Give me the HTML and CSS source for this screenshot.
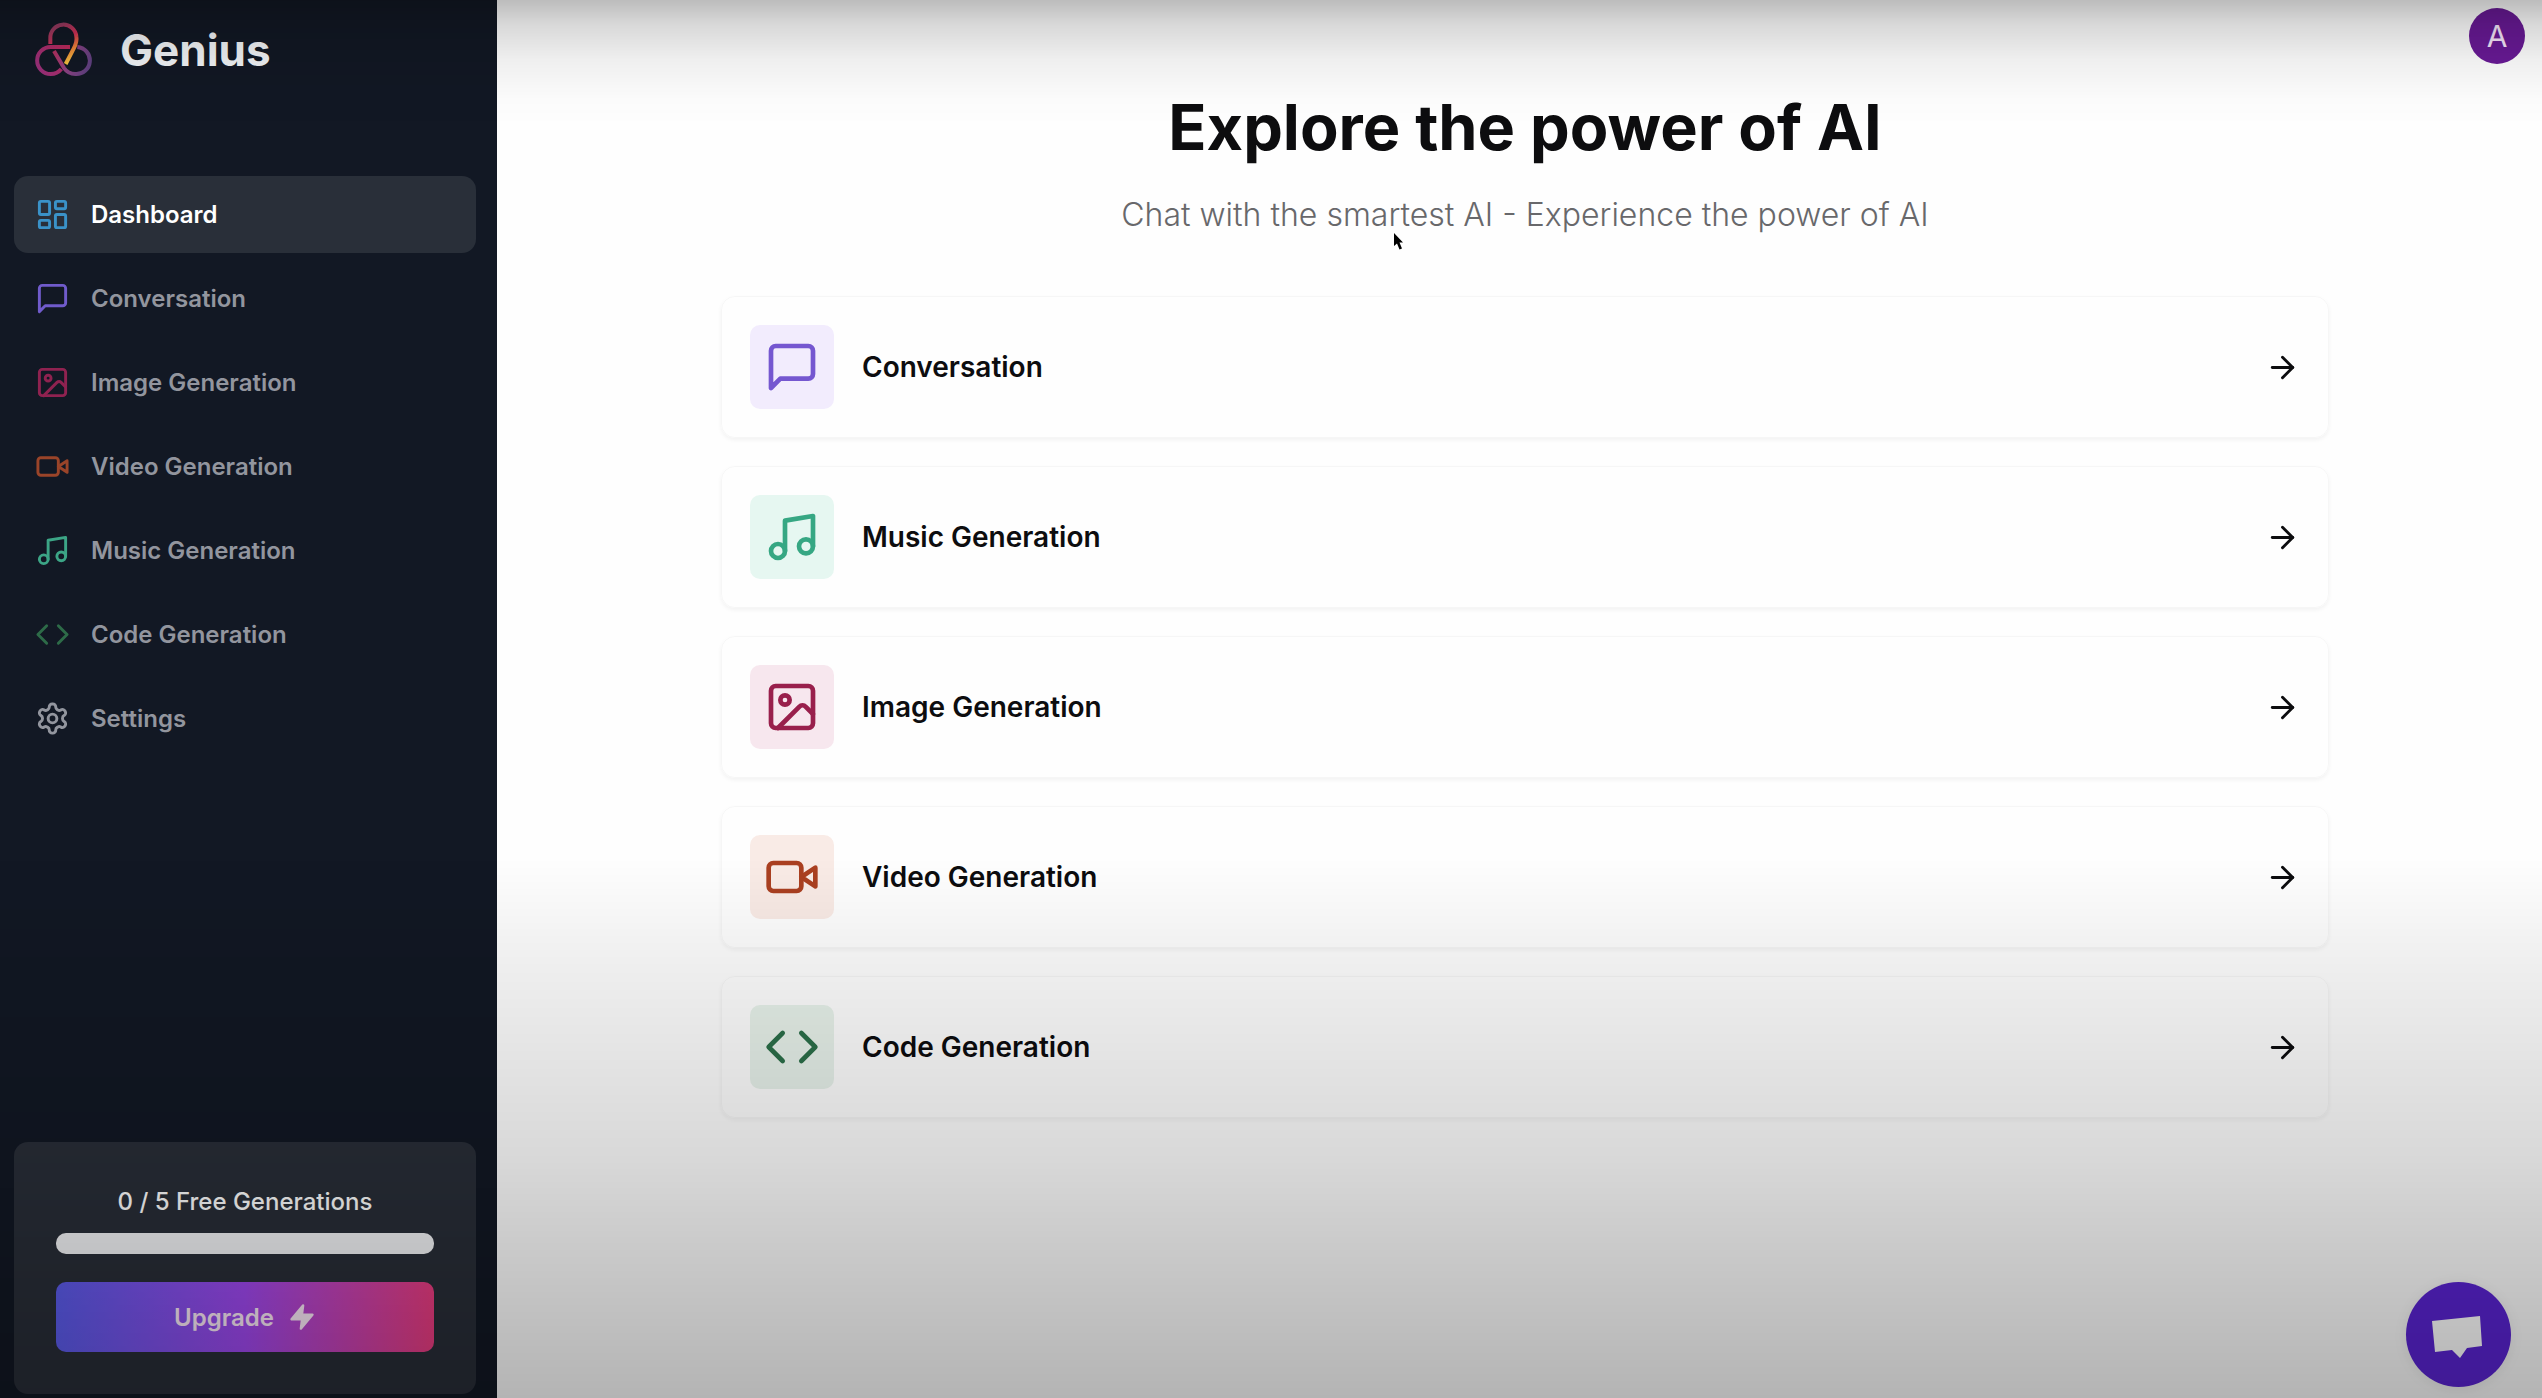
FILE: index.html
```html
<!DOCTYPE html>
<html lang="en">
<head>
<meta charset="utf-8">
<meta name="viewport" content="width=device-width, initial-scale=1">
<title>Genius</title>
<link rel="stylesheet" href="styles.css">
</head>
<body>
<svg class="defs" aria-hidden="true">
  <defs>
    <symbol id="i-dashboard" viewBox="0 0 24 24"><rect x="3" y="3" width="7" height="9" rx="1"/><rect x="14" y="3" width="7" height="5" rx="1"/><rect x="14" y="12" width="7" height="9" rx="1"/><rect x="3" y="16" width="7" height="5" rx="1"/></symbol>
    <symbol id="i-message" viewBox="0 0 24 24"><path d="M21 15a2 2 0 0 1-2 2H7l-4 4V5a2 2 0 0 1 2-2h14a2 2 0 0 1 2 2z"/></symbol>
    <symbol id="i-image" viewBox="0 0 24 24"><rect x="3" y="3" width="18" height="18" rx="2"/><circle cx="9" cy="9" r="2"/><path d="m21 15-3.086-3.086a2 2 0 0 0-2.828 0L6 21"/></symbol>
    <symbol id="i-video" viewBox="0 0 24 24"><path d="m22 8-6 4 6 4V8Z"/><rect x="2" y="6" width="14" height="12" rx="2"/></symbol>
    <symbol id="i-music" viewBox="0 0 24 24"><path d="M9 18V5l12-2v13"/><circle cx="6" cy="18" r="3"/><circle cx="18" cy="16" r="3"/></symbol>
    <symbol id="i-code" viewBox="0 0 24 24"><path d="m16 18 6-6-6-6"/><path d="m8 6-6 6 6 6"/></symbol>
    <symbol id="i-settings" viewBox="0 0 24 24"><path d="M12.22 2h-.44a2 2 0 0 0-2 2v.18a2 2 0 0 1-1 1.73l-.43.25a2 2 0 0 1-2 0l-.15-.08a2 2 0 0 0-2.73.73l-.22.38a2 2 0 0 0 .73 2.73l.15.1a2 2 0 0 1 1 1.72v.51a2 2 0 0 1-1 1.74l-.15.09a2 2 0 0 0-.73 2.73l.22.38a2 2 0 0 0 2.73.73l.15-.08a2 2 0 0 1 2 0l.43.25a2 2 0 0 1 1 1.73V20a2 2 0 0 0 2 2h.44a2 2 0 0 0 2-2v-.18a2 2 0 0 1 1-1.73l.43-.25a2 2 0 0 1 2 0l.15.08a2 2 0 0 0 2.73-.73l.22-.39a2 2 0 0 0-.73-2.73l-.15-.08a2 2 0 0 1-1-1.74v-.5a2 2 0 0 1 1-1.74l.15-.09a2 2 0 0 0 .73-2.73l-.22-.38a2 2 0 0 0-2.73-.73l-.15.08a2 2 0 0 1-2 0l-.43-.25a2 2 0 0 1-1-1.73V4a2 2 0 0 0-2-2z"/><circle cx="12" cy="12" r="3"/></symbol>
    <symbol id="i-arrow" viewBox="0 0 24 24"><path d="M5 12h14"/><path d="m12 5 7 7-7 7"/></symbol>
    <symbol id="i-zap" viewBox="0 0 24 24"><path d="M13 2 3 14h9l-1 8 10-12h-9l1-8z"/></symbol>
    <linearGradient id="g-top" gradientUnits="userSpaceOnUse" x1="150" y1="90" x2="205" y2="190"><stop offset="0" stop-color="#933a5f"/><stop offset=".4" stop-color="#cf2f56"/><stop offset=".7" stop-color="#ee8338"/><stop offset="1" stop-color="#f3c340"/></linearGradient>
    <linearGradient id="g-left" gradientUnits="userSpaceOnUse" x1="110" y1="200" x2="210" y2="141"><stop offset="0" stop-color="#98307a"/><stop offset="1" stop-color="#bd2a5a"/></linearGradient>
    <linearGradient id="g-right" gradientUnits="userSpaceOnUse" x1="160" y1="150" x2="270" y2="190"><stop offset="0" stop-color="#b5305f"/><stop offset=".5" stop-color="#8c4283"/><stop offset="1" stop-color="#604080"/></linearGradient>
  </defs>
</svg>

<div class="layout">
  <aside class="sidebar">
    <div>
      <a class="brand" href="#">
        <svg class="brand-mark" viewBox="102 68 174 164" aria-hidden="true">
          <path stroke="url(#g-right)" d="M162 153 192 204C200 216 212 222 226 222A40.500 40.500 0 0 0 232 141"/>
          <path stroke="url(#g-left)" d="M210 141H152A40.500 40.500 0 1 0 152 222C166 222 176 217 184 207"/>
          <path stroke="url(#g-top)" d="M151 132V116A39 39 0 0 1 229 110C232 124 226 136 221 146L197 192"/>
        </svg>
        <span>Genius</span>
      </a>
      <nav class="nav" aria-label="Main">
        <a class="nav-link active" href="#" aria-current="page"><svg class="icon sky"><use href="#i-dashboard"/></svg>Dashboard</a>
        <a class="nav-link" href="#"><svg class="icon violet"><use href="#i-message"/></svg>Conversation</a>
        <a class="nav-link" href="#"><svg class="icon pink"><use href="#i-image"/></svg>Image Generation</a>
        <a class="nav-link" href="#"><svg class="icon orange"><use href="#i-video"/></svg>Video Generation</a>
        <a class="nav-link" href="#"><svg class="icon emerald"><use href="#i-music"/></svg>Music Generation</a>
        <a class="nav-link" href="#"><svg class="icon green"><use href="#i-code"/></svg>Code Generation</a>
        <a class="nav-link" href="#"><svg class="icon"><use href="#i-settings"/></svg>Settings</a>
      </nav>
    </div>
    <section class="usage">
      <p class="usage-text" id="usage-label">0 / 5 Free Generations</p>
      <div class="meter" role="progressbar" aria-labelledby="usage-label" aria-valuemin="0" aria-valuemax="5" aria-valuenow="0"></div>
      <button class="upgrade" type="button">Upgrade<svg class="zap"><use href="#i-zap"/></svg></button>
    </section>
  </aside>

  <main class="main">
    <header class="topbar"><button class="avatar" type="button" aria-label="Account">A</button></header>
    <div class="intro">
      <h1>Explore the power of AI</h1>
      <p>Chat with the smartest AI - Experience the power of AI</p>
    </div>
    <div class="tools">
      <a class="card" href="#"><span class="tile violet"><svg class="icon"><use href="#i-message"/></svg></span><span class="card-name">Conversation</span><svg class="icon"><use href="#i-arrow"/></svg></a>
      <a class="card" href="#"><span class="tile emerald"><svg class="icon"><use href="#i-music"/></svg></span><span class="card-name">Music Generation</span><svg class="icon"><use href="#i-arrow"/></svg></a>
      <a class="card" href="#"><span class="tile pink"><svg class="icon"><use href="#i-image"/></svg></span><span class="card-name">Image Generation</span><svg class="icon"><use href="#i-arrow"/></svg></a>
      <a class="card" href="#"><span class="tile orange"><svg class="icon"><use href="#i-video"/></svg></span><span class="card-name">Video Generation</span><svg class="icon"><use href="#i-arrow"/></svg></a>
      <a class="card" href="#"><span class="tile green"><svg class="icon"><use href="#i-code"/></svg></span><span class="card-name">Code Generation</span><svg class="icon"><use href="#i-arrow"/></svg></a>
    </div>
  </main>
</div>

<button class="chat" type="button" aria-label="Open chat">
  <svg viewBox="0 0 105 105" aria-hidden="true"><path d="M26 39 74 34 76 64 61 66 54 76 46 68 29 70Z"/></svg>
</button>
<svg class="pointer" viewBox="0 0 12 20" aria-hidden="true"><path d="M1 1V14L4 11.500 6.500 17.500 9 16.500 6.500 10.500H10Z"/></svg>
<div class="shade"></div>
</body>
</html>
```

FILE: styles.css
```css
* { box-sizing: border-box; }

body {
  margin: 0;
  background: #fefefe;
  color: #0d0d0f;
  font-family: Inter, "Liberation Sans", sans-serif;
}

a { color: inherit; text-decoration: none; }
button { border: 0; font: inherit; cursor: pointer; }
h1, p { margin: 0; }

.defs { position: absolute; width: 0; height: 0; }

.layout {
  display: grid;
  grid-template-columns: 497px 1fr;
  min-height: 100vh;
}

/* Sidebar */
.sidebar {
  display: flex;
  flex-direction: column;
  justify-content: space-between;
  gap: 28px;
  padding: 14px 21px 4px 14px;
  background: #121824;
  color: #fff;
}

.brand {
  display: flex;
  align-items: center;
  gap: 28px;
  height: 72px;
  padding-left: 20px;
  color: #f1f3f6;
  font-size: 44px;
  font-weight: 700;
}

.brand-mark {
  width: 58px;
  height: 56px;
  fill: none;
  stroke-width: 12;
}

.nav {
  display: flex;
  flex-direction: column;
  gap: 7px;
  margin-top: 90px;
}

.nav-link {
  display: flex;
  align-items: center;
  gap: 21px;
  height: 77px;
  padding: 0 21px;
  border-radius: 14px;
  color: #92959e;
  font-size: 24px;
  font-weight: 600;
}

.nav-link.active { background: #292f39; color: #fff; }

.icon {
  flex: none;
  width: 35px;
  height: 35px;
  fill: none;
  stroke: currentColor;
  stroke-width: 2;
  stroke-linecap: round;
  stroke-linejoin: round;
}

.nav .sky { color: #3a92c8; }
.nav .violet { color: #705bcb; }
.nav .pink { color: #8f2250; }
.nav .orange { color: #9a4429; }
.nav .emerald { color: #3ca586; }
.nav .green { color: #2d6b48; }

.usage {
  display: flex;
  flex-direction: column;
  padding: 42px;
  border-radius: 14px;
  background: #292e38;
}

.usage-text {
  font-size: 24px;
  font-weight: 500;
  line-height: 35px;
  text-align: center;
}

.meter {
  height: 21px;
  margin: 14px 0 28px;
  border-radius: 10px;
  background: #f4f5f8;
}

.upgrade {
  display: flex;
  align-items: center;
  justify-content: center;
  gap: 14px;
  height: 70px;
  border-radius: 10px;
  background: linear-gradient(to right, #5b5ceb, #9f48ee 50%, #ea3d80);
  color: #fbe9f8;
  font-size: 24px;
  font-weight: 600;
}

.zap {
  width: 28px;
  height: 28px;
  fill: currentColor;
  stroke: currentColor;
  stroke-width: 2;
  stroke-linejoin: round;
}

/* Main column */
.topbar {
  display: flex;
  justify-content: flex-end;
  padding: 8px 17px 0;
}

.avatar {
  width: 56px;
  height: 56px;
  padding: 0;
  border-radius: 50%;
  background: #691a96;
  color: #f6e6fb;
  font-size: 30px;
}

.intro {
  padding: 28px 213px 56px 224px;
  text-align: center;
}

.intro h1 {
  font-size: 63px;
  font-weight: 700;
  line-height: 70px;
}

.intro p {
  margin-top: 28px;
  color: #68686b;
  font-size: 32px;
  font-weight: 300;
  line-height: 50px;
}

.tools {
  display: flex;
  flex-direction: column;
  gap: 28px;
  padding: 0 213px 28px 224px;
}

.card {
  display: flex;
  align-items: center;
  gap: 28px;
  padding: 28px;
  border: 1px solid rgb(0 0 0 / 3%);
  border-radius: 14px;
  box-shadow: 0 2px 4px rgb(0 0 0 / 5%);
}

.card-name {
  flex: 1;
  font-size: 28px;
  font-weight: 600;
}

.tile {
  display: flex;
  padding: 14px;
  border-radius: 10px;
}

.tile .icon { width: 56px; height: 56px; }

.tile.violet { background: #f2ecfd; color: #7557d0; }
.tile.emerald { background: #e6f7f1; color: #36a783; }
.tile.pink { background: #f7e7ee; color: #99204c; }
.tile.orange { background: #f9ebe6; color: #ab4021; }
.tile.green { background: #e8f2eb; color: #2c704a; }

/* Floating elements */
.chat {
  position: fixed;
  right: 31px;
  bottom: 11px;
  width: 105px;
  height: 105px;
  padding: 0;
  border-radius: 50%;
  background: #5a24d2;
  box-shadow: 0 2px 14px rgb(0 0 0 / 8%);
}

.chat svg { display: block; fill: #fff; }

.pointer {
  position: absolute;
  top: 232px;
  left: 1393px;
  width: 12px;
  height: 20px;
  stroke: #fff;
  stroke-width: 1;
  paint-order: stroke;
}

.shade {
  position: fixed;
  inset: 0;
  pointer-events: none;
  background:
    linear-gradient(to bottom, rgb(0 0 0 / 26%), rgb(0 0 0 / 15%) 24px, rgb(0 0 0 / 6%) 60px, rgb(0 0 0 / 1%) 100px, transparent 125px),
    linear-gradient(to top, rgb(0 0 0 / 29%), rgb(0 0 0 / 20%) 158px, rgb(0 0 0 / 15%) 238px, rgb(0 0 0 / 6%) 438px, transparent 540px);
}
```
